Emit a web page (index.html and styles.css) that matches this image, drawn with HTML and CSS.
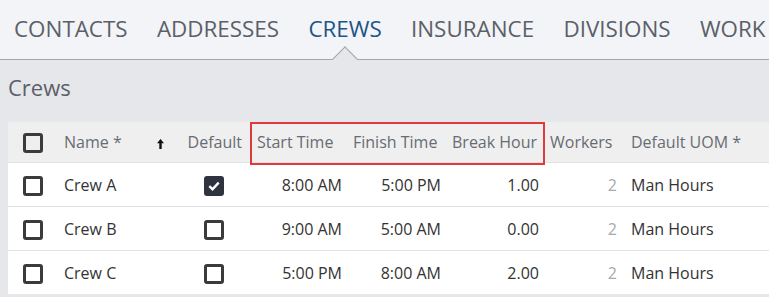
FILE: index.html
```html
<!DOCTYPE html>
<html lang="en">
<head>
    <meta charset="UTF-8">
    <meta name="viewport" content="width=device-width, initial-scale=1.0">
    <title>Crews</title>
    <link rel="stylesheet" href="styles.css">
</head>
<body>
    <div class="tabs">
        <span class="tab">CONTACTS</span>
        <span class="tab">ADDRESSES</span>
        <span class="tab active">CREWS</span>
        <span class="tab">INSURANCE</span>
        <span class="tab">DIVISIONS</span>
        <span class="tab">WORK</span>
    </div>

    <div class="content">
        <h2 class="title">Crews</h2>
        <div class="grid-wrap">
            <table class="grid">
                <colgroup>
                    <col style="width: 44px">
                    <col style="width: 123px">
                    <col style="width: 73px">
                    <col style="width: 100px">
                    <col style="width: 99px">
                    <col style="width: 98px">
                    <col style="width: 78px">
                    <col>
                </colgroup>
                <thead>
                    <tr>
                        <th class="sel"><span class="box"></span></th>
                        <th class="name-head">Name *<svg class="sort" width="7" height="10" viewBox="0 0 7 10"><path d="M3.5 0 L7 4.2 H4.7 V10 H2.3 V4.2 H0 Z" fill="#111"/></svg></th>
                        <th class="right">Default</th>
                        <th class="start-head">Start Time</th>
                        <th>Finish Time</th>
                        <th>Break Hour</th>
                        <th>Workers</th>
                        <th class="uom">Default UOM *</th>
                    </tr>
                </thead>
                <tbody>
                    <tr>
                        <td class="sel"><span class="box"></span></td>
                        <td>Crew A</td>
                        <td class="center"><span class="box checked"><svg width="12" height="10" viewBox="0 0 12 10"><path d="M1.3 5.2 L4.5 8.2 L10.7 1.6" fill="none" stroke="#fff" stroke-width="2.4"/></svg></span></td>
                        <td class="right">8:00 AM</td>
                        <td class="right">5:00 PM</td>
                        <td class="right">1.00</td>
                        <td class="right muted">2</td>
                        <td class="uom">Man Hours</td>
                    </tr>
                    <tr>
                        <td class="sel"><span class="box"></span></td>
                        <td>Crew B</td>
                        <td class="center"><span class="box"></span></td>
                        <td class="right">9:00 AM</td>
                        <td class="right">5:00 AM</td>
                        <td class="right">0.00</td>
                        <td class="right muted">2</td>
                        <td class="uom">Man Hours</td>
                    </tr>
                    <tr>
                        <td class="sel"><span class="box"></span></td>
                        <td>Crew C</td>
                        <td class="center"><span class="box"></span></td>
                        <td class="right">5:00 PM</td>
                        <td class="right">8:00 AM</td>
                        <td class="right">2.00</td>
                        <td class="right muted">2</td>
                        <td class="uom">Man Hours</td>
                    </tr>
                </tbody>
            </table>
            <div class="highlight"></div>
        </div>
    </div>
</body>
</html>
```

FILE: styles.css
```css
body {
    font-family: "Open Sans", "Noto Sans", sans-serif;
    margin: 0;
    background: #e6e7eb;
    color: #333;
    overflow: hidden;
}
.tabs {
    display: flex;
    gap: 29.3px;
    height: 60px;
    align-items: center;
    padding-left: 14px;
    background: #f3f4f7;
    border-bottom: 1px solid #a3a5a9;
    white-space: nowrap;
    box-sizing: border-box;
    position: relative;
}
.tab {
    font-size: 22.4px;
    color: #5b6068;
    position: relative;
    line-height: 30px;
    margin-top: -1px;
}
.tab.active {
    color: #1d5587;
}
.tab.active::after {
    content: "";
    position: absolute;
    left: 50%;
    top: 36px;
    width: 17px;
    height: 17px;
    margin-left: -9px;
    background: #e6e7eb;
    border-top: 1px solid #a3a5a9;
    border-left: 1px solid #a3a5a9;
    transform: rotate(45deg);
}
.content {
    padding-left: 8px;
}
.title {
    margin: 12px 0 20px;
    font-size: 22px;
    font-weight: normal;
    line-height: 30px;
    color: #5b6068;
}
.grid-wrap {
    position: relative;
}
.grid {
    width: 100%;
    border-collapse: collapse;
    table-layout: fixed;
    font-size: 16px;
}
.grid th {
    height: 40px;
    padding: 0 5px;
    background: #efefef;
    font-weight: normal;
    color: #676c73;
    text-align: left;
    white-space: nowrap;
}
.grid td {
    height: 43px;
    padding: 0 6px;
    background: #fff;
    border-top: 1px solid #e3e3e5;
    white-space: nowrap;
}
.grid th.sel,
.grid td.sel {
    padding: 0 0 0 15px;
}
.grid th.name-head {
    padding-left: 12px;
}
.grid td:nth-child(2) {
    padding-left: 12px;
}
.grid th.start-head {
    padding-left: 9px;
}
.grid .uom {
    padding-left: 8px;
}
.sort {
    margin-left: 35px;
    vertical-align: -1px;
}
.grid .right {
    text-align: right;
}
.grid th.right {
    padding-right: 6px;
}
.grid .center {
    text-align: center;
    padding-left: 11px;
}
.muted {
    color: #a9a9a9;
}
.box {
    display: inline-block;
    width: 14px;
    height: 14px;
    border: 3px solid #3b3b3b;
    border-radius: 3px;
    vertical-align: middle;
    position: relative;
}
.box.checked {
    background: #2f3340;
    border-color: #2f3340;
}
.box.checked svg {
    position: absolute;
    left: 1px;
    top: 2px;
}
.highlight {
    position: absolute;
    left: 242px;
    top: 0;
    width: 291px;
    height: 39px;
    border: 2px solid #e0393e;
}
```
